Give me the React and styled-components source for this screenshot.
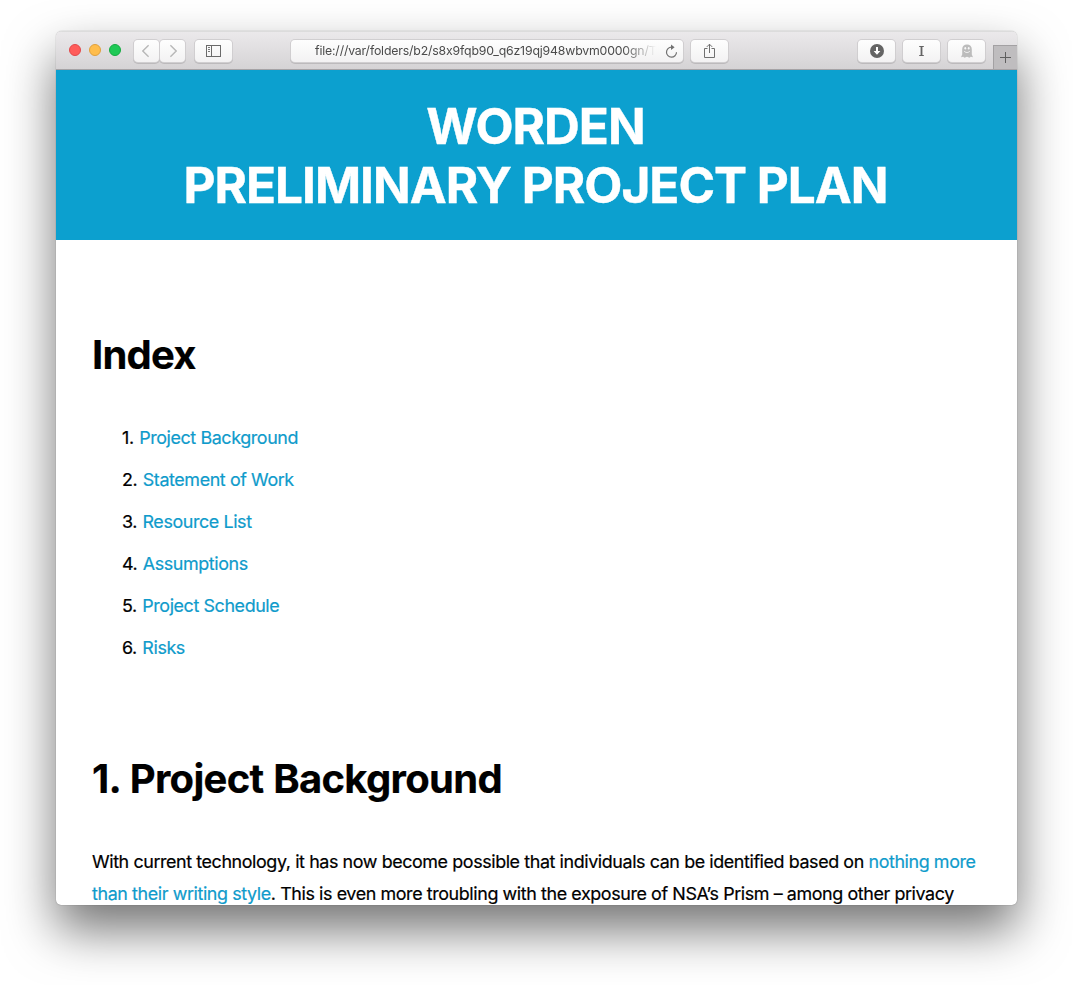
import React from "react";
import styled, { createGlobalStyle } from "styled-components";

const GlobalStyle = createGlobalStyle`
  * { box-sizing: border-box; }
  html, body { margin: 0; padding: 0; background: #fff; }
  body { height: 985px; overflow: hidden; font-family: Inter, "Liberation Sans", sans-serif; }
`;

const Desktop = styled.div`
  height: 985px;
  padding: 31px 56px 80px;
  overflow: hidden;
`;

const Window = styled.main`
  width: 961px;
  height: 874px;
  display: flex;
  flex-direction: column;
  border-radius: 6px 6px 5px 5px;
  overflow: hidden;
  background: #fff;
  box-shadow: 0 0 1px rgba(0, 0, 0, 0.5), 0 25px 50px rgba(0, 0, 0, 0.55);
`;

const TitleBar = styled.header`
  flex: none;
  height: 39px;
  display: flex;
  align-items: flex-start;
  padding: 8px 0 0 13px;
  border-top: 1px solid #dcdcdc;
  border-bottom: 1px solid #a5a2a5;
  background: linear-gradient(#ebe9eb, #d5d3d5);
`;

const Lights = styled.div`
  display: flex;
  gap: 8px;
  margin: 4px 13px 0 0;
`;

const Light = styled.span`
  width: 12px;
  height: 12px;
  border-radius: 50%;
  background: ${(p) => p.$fill};
  border: 1px solid ${(p) => p.$edge};
`;

const ToolButton = styled.button`
  width: ${(p) => p.$width || 37}px;
  height: 22px;
  margin: 0 ${(p) => p.$after || 0}px 0 0;
  padding: 0;
  display: flex;
  align-items: center;
  justify-content: center;
  border: 0;
  border-radius: 4px;
  background: linear-gradient(#fefefe, #f3f2f3);
  box-shadow: 0 0 0 1px #d0ced0, 0 1px 0 1px #bcbabc;
  color: #6c6c6c;
  svg { display: block; }
`;

const AddressBar = styled.div`
  width: 392px;
  height: 22px;
  margin: 0 8px 0 59px;
  padding: 0 5px 0 24px;
  display: flex;
  align-items: center;
  justify-content: space-between;
  border-radius: 4px;
  background: linear-gradient(#fefefe, #f3f2f3);
  box-shadow: 0 0 0 1px #d0ced0, 0 1px 0 1px #bcbabc;
`;

const Url = styled.span`
  width: 341px;
  overflow: hidden;
  white-space: nowrap;
  font-size: 12.3px;
  line-height: 22px;
  letter-spacing: -0.17px;
  font-feature-settings: "calt" 0;
  color: #4b4b4b;
  mask-image: linear-gradient(to right, #000 308px, transparent 341px);
`;

const Extensions = styled.div`
  display: flex;
  gap: 8px;
  margin: 0 8px 0 auto;
`;

const NewTab = styled.button`
  width: 24px;
  height: 24px;
  margin: 5px 0 0;
  padding: 0;
  display: flex;
  align-items: center;
  justify-content: center;
  border: solid #a3a1a3;
  border-width: 1px 0 0 1px;
  background: #bfbdbf;
`;

const Banner = styled.div`
  flex: none;
  height: 170px;
  padding: 27px 2px 0 0;
  background: #0ca0cf;
  text-align: center;
`;

const Title = styled.h1`
  margin: 0;
  font-size: 49.5px;
  line-height: 59px;
  font-weight: 700;
  letter-spacing: -1px;
  color: #fff;
  -webkit-text-stroke: 0.4px currentColor;
`;

const Article = styled.article`
  flex: 1;
  min-height: 0;
  overflow: hidden;
  padding: 91px 36px 0;
  font-size: 17.9px;
  color: #000;
  -webkit-text-stroke: 0.2px currentColor;
`;

const Heading = styled.h2`
  margin: 0;
  font-size: 40px;
  line-height: 48px;
  font-weight: 700;
  letter-spacing: ${(p) => p.$tracking || "-0.8px"};
  word-spacing: 1px;
`;

const IndexList = styled.ol`
  margin: 38px 0 86px;
  padding: 0 0 0 30px;
  list-style: none;
`;

const IndexItem = styled.li`
  height: 42px;
  line-height: 42px;
  display: flex;
  gap: 5.5px;
  letter-spacing: -0.4px;
`;

const Link = styled.a`
  color: #0f9bcb;
  text-decoration: none;
  -webkit-text-stroke: 0.2px #0f9bcb;
`;

const Paragraph = styled.p`
  margin: 43px 0 0;
  line-height: 32px;
`;

const Line = styled.span`
  display: block;
  white-space: nowrap;
  letter-spacing: ${(p) => p.$tracking};
`;

const chapters = [
  "Project Background",
  "Statement of Work",
  "Resource List",
  "Assumptions",
  "Project Schedule",
  "Risks",
];

const Chevron = ({ d }) => (
  <svg width="9" height="14" viewBox="0 0 9 14" fill="none" stroke="#b8b8b8" strokeWidth="1.4">
    <path d={d} />
  </svg>
);

const SidebarIcon = () => (
  <svg width="15" height="12" viewBox="0 0 15 12" fill="none" stroke="#6a6a6a">
    <rect x="0.5" y="0.5" width="14" height="11" />
    <path d="M5.5 0.5v11" />
    <path d="M2 2.5h2M2 4.5h2M2 6.5h2" strokeWidth="0.9" />
  </svg>
);

const ReloadIcon = () => (
  <svg width="13" height="15" viewBox="0 0 13 15" fill="none">
    <path d="M6.5 3.2A5 5 0 1 0 11.5 8.3" stroke="#707070" strokeWidth="1.2" />
    <path d="M6 0.5 9.6 3.3 6 6z" fill="#707070" />
  </svg>
);

const ShareIcon = () => (
  <svg width="11" height="16" viewBox="0 0 11 16" fill="none" stroke="#707070">
    <path d="M3.5 5.5h-3v9h10v-9h-3" />
    <path d="M5.5 10V1.2M2.8 3.9 5.5 1.2l2.7 2.7" />
  </svg>
);

const DownloadIcon = () => (
  <svg width="14" height="14" viewBox="0 0 14 14">
    <circle cx="7" cy="7" r="7" fill="#646464" />
    <path d="M6 3h2v4h2.4L7 10.8 3.6 7H6z" fill="#fff" />
  </svg>
);

const BeamIcon = () => (
  <svg width="5" height="10" viewBox="0 0 5 10" fill="none" stroke="#646464">
    <path d="M0.2 0.5h4.6M0.2 9.5h4.6" />
    <path d="M2.5 0.5v9" strokeWidth="1.8" />
  </svg>
);

const GhostIcon = () => (
  <svg width="12" height="14" viewBox="0 0 12 14">
    <path d="M1.2 5.2C1.2 2 3.1.4 6 .4s4.8 1.6 4.8 4.8v5.2l1.2 2.8-2.2-.4-1.3 1L6 12.8l-2.5 1-1.3-1L0 13.2l1.2-2.8z" fill="#bcbcbc" />
    <ellipse cx="4.3" cy="4.3" rx=".9" ry="1.3" fill="#f8f8f8" />
    <ellipse cx="7.7" cy="4.3" rx=".9" ry="1.3" fill="#f8f8f8" />
    <path d="M3.2 7c1 2 4.6 2 5.6 0" stroke="#f8f8f8" strokeWidth=".9" fill="none" />
  </svg>
);

const PlusIcon = () => (
  <svg width="11" height="11" viewBox="0 0 11 11" stroke="#5f5f5f" fill="none">
    <path d="M5.5 0v11M0 5.5h11" />
  </svg>
);

export default function App() {
  return (
    <Desktop>
      <GlobalStyle />
      <Window>
        <TitleBar>
          <Lights>
            <Light $fill="#ff5c5a" $edge="#e2484a" />
            <Light $fill="#ffbd4c" $edge="#e0a03c" />
            <Light $fill="#1fc956" $edge="#14ab41" />
          </Lights>
          <ToolButton $width={25} $after={1} aria-label="Back">
            <Chevron d="M6.6 1.3.8 7l5.8 5.7" />
          </ToolButton>
          <ToolButton $width={25} $after={10} aria-label="Forward">
            <Chevron d="m2.4 1.3 5.8 5.7-5.8 5.7" />
          </ToolButton>
          <ToolButton aria-label="Sidebar"><SidebarIcon /></ToolButton>
          <AddressBar>
            <Url>file:///var/folders/b2/s8x9fqb90_q6z19qj948wbvm0000gn/T</Url>
            <ReloadIcon />
          </AddressBar>
          <ToolButton aria-label="Share"><ShareIcon /></ToolButton>
          <Extensions>
            <ToolButton aria-label="Downloads"><DownloadIcon /></ToolButton>
            <ToolButton aria-label="Reader"><BeamIcon /></ToolButton>
            <ToolButton aria-label="Privacy"><GhostIcon /></ToolButton>
          </Extensions>
          <NewTab aria-label="New tab"><PlusIcon /></NewTab>
        </TitleBar>
        <Banner>
          <Title>WORDEN<br />PRELIMINARY PROJECT PLAN</Title>
        </Banner>
        <Article>
          <Heading>Index</Heading>
          <IndexList>
            {chapters.map((name, i) => (
              <IndexItem key={name}>
                <span>{i + 1}.</span>
                <Link>{name}</Link>
              </IndexItem>
            ))}
          </IndexList>
          <Heading $tracking="-0.7px">1. Project Background</Heading>
          <Paragraph>
            <Line $tracking="-0.405px">
              With current technology, it has now become possible that individuals can be identified based on <Link>nothing more</Link>
            </Line>
            <Line $tracking="-0.4px">
              <Link>than their writing style</Link>. This is even more troubling with the exposure of NSA’s Prism – among other privacy
            </Line>
          </Paragraph>
        </Article>
      </Window>
    </Desktop>
  );
}
